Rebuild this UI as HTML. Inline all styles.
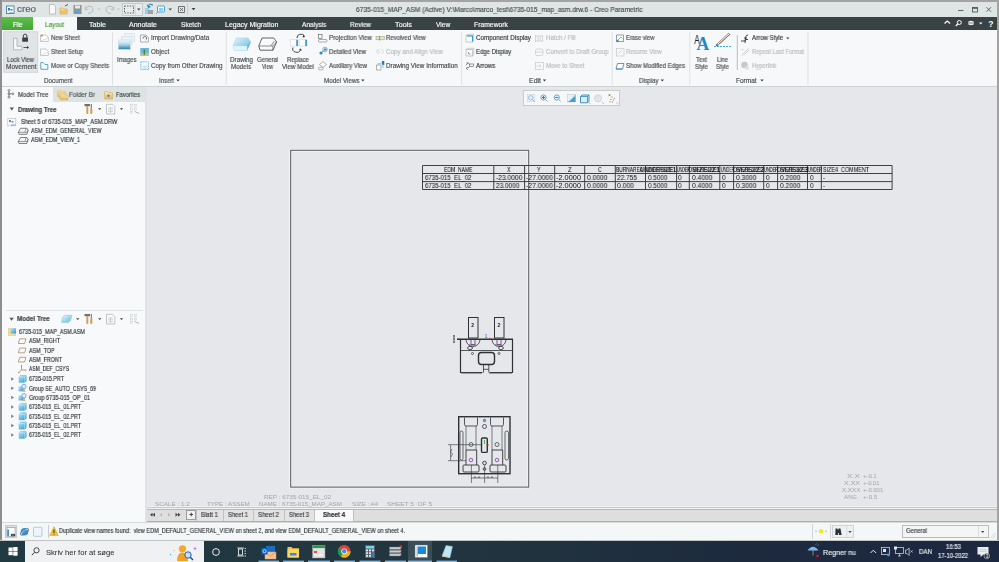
<!DOCTYPE html>
<html><head><meta charset="utf-8"><style>
html,body{margin:0;padding:0;width:999px;height:562px;overflow:hidden;background:#e6e7eb}
body>div{position:absolute}
.t{position:absolute;white-space:pre;line-height:1;-webkit-text-stroke:0.17px currentColor;will-change:transform;font-family:"Liberation Sans",sans-serif;transform-origin:0 50%}
svg{position:absolute;left:0;top:0}
</style></head><body>
<div style="left:0px;top:0px;width:999px;height:562px;background:#e6e7eb"></div>
<div style="left:0px;top:0px;width:999px;height:2px;background:#a3a3a3"></div>
<div style="left:0px;top:0px;width:2px;height:541px;background:#8e8e8e"></div>
<div style="left:997px;top:0px;width:2px;height:541px;background:#a2a2a2"></div>
<div style="left:2px;top:2px;width:995px;height:15px;background:#dfe4e4"></div>
<div style="left:2px;top:17px;width:995px;height:13px;background:#3a4344"></div>
<div style="left:2px;top:17px;width:31px;height:13px;background:linear-gradient(#5cc049,#43a535)"></div>
<div style="left:33px;top:17px;width:44px;height:14px;background:#f6f8f9"></div>
<div style="left:2px;top:30px;width:995px;height:56px;background:#f6f8f9"></div>
<div style="left:77px;top:30px;width:920px;height:1px;background:#f6f8f9"></div>
<div style="left:2px;top:86px;width:995px;height:1px;background:#cdd2d3"></div>
<div style="left:2px;top:87px;width:144px;height:15px;background:#dde3e3"></div>
<div style="left:2px;top:87px;width:51px;height:15px;background:#f7f9fa"></div>
<div style="left:2px;top:102px;width:143px;height:420px;background:#f7f9fa"></div>
<div style="left:145px;top:87px;width:2px;height:435px;background:#dfe3e4"></div>
<div style="left:6px;top:310px;width:137px;height:1px;background:#dfe4e5"></div>
<div style="left:147px;top:87px;width:850px;height:421px;background:#e6e7eb"></div>
<div style="left:523px;top:90px;width:97px;height:16px;background:#f6f7f8;border:1px solid #c9cbcd;box-sizing:border-box"></div>
<div style="left:147px;top:506px;width:850px;height:1px;background:#eef0f2"></div>
<div style="left:147px;top:507px;width:850px;height:1px;background:#c6c8cb"></div>
<div style="left:147px;top:508px;width:850px;height:1px;background:#f1f2f3"></div>
<div style="left:147px;top:509px;width:850px;height:1px;background:#b4b7b9"></div>
<div style="left:147px;top:510px;width:850px;height:12px;background:#dedede"></div>
<div style="left:147px;top:521px;width:850px;height:1.5px;background:#aab0b2"></div>
<div style="left:186px;top:510px;width:10px;height:10px;background:#f0f0f0;border:1px solid #9c9c9c;box-sizing:border-box"></div>
<div style="left:196px;top:510px;width:118px;height:11px;background:#e3e3e3"></div>
<div style="left:196px;top:510px;width:1px;height:11px;background:#c2c2c2"></div>
<div style="left:223px;top:510px;width:1px;height:11px;background:#c2c2c2"></div>
<div style="left:253px;top:510px;width:1px;height:11px;background:#c2c2c2"></div>
<div style="left:284px;top:510px;width:1px;height:11px;background:#c2c2c2"></div>
<div style="left:314px;top:509.5px;width:40px;height:12px;background:#f9f9f9;border:1px solid #c0c0c0;border-top:none;box-sizing:border-box"></div>
<div style="left:2px;top:522px;width:995px;height:18px;background:#f3f7f8"></div>
<div style="left:2px;top:522px;width:995px;height:1px;background:#d4d8d9"></div>
<div style="left:0px;top:540px;width:999px;height:1px;background:#c2c4c5"></div>
<div style="left:5px;top:525px;width:12px;height:13px;background:#dde1e3;border:1px solid #c5c9cb;box-sizing:border-box"></div>
<div style="left:48px;top:525px;width:1px;height:13px;background:#c9cdcf"></div>
<div style="left:812px;top:524px;width:1px;height:15px;background:#d0d4d6"></div>
<div style="left:830px;top:524px;width:1px;height:15px;background:#d0d4d6"></div>
<div style="left:832px;top:525px;width:22px;height:13px;background:#eef1f2;border:1px solid #cfd3d5;box-sizing:border-box"></div>
<div style="left:902px;top:525px;width:87px;height:13px;background:#f4f6f6;border:1px solid #b9bdbf;box-sizing:border-box"></div>
<div style="left:0px;top:541px;width:999px;height:21px;background:linear-gradient(90deg,#213a41 0%,#22353f 45%,#1d2a3e 75%,#1c2840 100%)"></div>
<div style="left:25px;top:541px;width:179px;height:21px;background:#eff1f2"></div>
<div style="left:408px;top:541px;width:24px;height:21px;background:#3b4d57"></div>
<svg width="999" height="562" viewBox="0 0 999 562"><rect x="290.7" y="150.3" width="238" height="336.8" fill="none" stroke="#f7f8fa" stroke-width="2.6"/>
<rect x="290.7" y="150.3" width="238" height="336.8" fill="none" stroke="#5d6063" stroke-width="1.1"/>
<rect x="616" y="166.2" width="205" height="6.6" fill="#dcdde0"/>
<g stroke="#3d4144" stroke-width="1" fill="none">
<line x1="422.5" y1="165.5" x2="422.5" y2="189.5"/>
<line x1="493.8" y1="165.5" x2="493.8" y2="189.5"/>
<line x1="524.6" y1="165.5" x2="524.6" y2="189.5"/>
<line x1="554.7" y1="165.5" x2="554.7" y2="189.5"/>
<line x1="584.7" y1="165.5" x2="584.7" y2="189.5"/>
<line x1="615.3" y1="165.5" x2="615.3" y2="189.5"/>
<line x1="645.5" y1="165.5" x2="645.5" y2="189.5"/>
<line x1="676.6" y1="165.5" x2="676.6" y2="189.5"/>
<line x1="689.3" y1="165.5" x2="689.3" y2="189.5"/>
<line x1="719.8" y1="165.5" x2="719.8" y2="189.5"/>
<line x1="733.6" y1="165.5" x2="733.6" y2="189.5"/>
<line x1="763.7" y1="165.5" x2="763.7" y2="189.5"/>
<line x1="777.6" y1="165.5" x2="777.6" y2="189.5"/>
<line x1="807.5" y1="165.5" x2="807.5" y2="189.5"/>
<line x1="821.3" y1="165.5" x2="821.3" y2="189.5"/>
<line x1="892.1" y1="165.5" x2="892.1" y2="189.5"/>
<line x1="422.5" y1="165.5" x2="892.1" y2="165.5"/>
<line x1="422.5" y1="173.5" x2="892.1" y2="173.5"/>
<line x1="422.5" y1="181.6" x2="892.1" y2="181.6"/>
<line x1="422.5" y1="189.5" x2="892.1" y2="189.5"/>
</g>
<g fill="none" stroke="#2e3236" stroke-width="1">
<rect x="468.5" y="317.5" width="9.5" height="20.5"/>
<rect x="494.5" y="317.5" width="9.5" height="20.5"/>
<path d="M482.5 372.5 H460.5 V339.5 H512.5 V372.5 H489.5" stroke-width="1.2"/>
<path d="M483.5 364.8 V372.5 M488.8 364.8 V372.5 M483.5 369.3 H488.8" stroke-width="0.8"/>
<line x1="457" y1="339.3" x2="513" y2="339.3" stroke-width="1.5"/>
<line x1="461" y1="350.5" x2="512" y2="350.5" stroke-width="0.8"/>
<rect x="478.5" y="352.5" width="16" height="12" rx="3" stroke-width="1.4"/>
<path d="M466 339.5 A7 7 0 0 0 480 339.5" stroke-width="0.8"/>
<path d="M492 339.5 A7 7 0 0 0 506 339.5" stroke-width="0.8"/>
<rect x="471" y="339.5" width="4" height="5" stroke-width="0.7"/>
<rect x="497" y="339.5" width="4" height="5" stroke-width="0.7"/>
<ellipse cx="470" cy="348" rx="2.5" ry="1.6" stroke-width="0.8"/>
<ellipse cx="501" cy="348" rx="2.5" ry="1.6" stroke-width="0.8"/>
<circle cx="472.5" cy="353.5" r="1" stroke-width="0.7"/>
<circle cx="499" cy="353.5" r="1" stroke-width="0.7"/>
<line x1="461" y1="373.3" x2="482" y2="373.3" stroke="#777" stroke-width="0.8"/>
<line x1="489" y1="373.3" x2="512" y2="373.3" stroke="#777" stroke-width="0.8"/>
</g>
<text x="471.3" y="326.5" font-family="Liberation Sans" font-weight="700" font-size="4.8" fill="#111">2</text>
<text x="497.6" y="326.5" font-family="Liberation Sans" font-weight="700" font-size="4.8" fill="#111">2</text>
<text x="484.8" y="338" font-family="Liberation Sans" font-size="4.5" fill="#2a3cd0">1</text>
<circle cx="490" cy="338.5" r="0.8" fill="#d03030"/>
<line x1="469" y1="345" x2="476" y2="345" stroke="#8a2aa0" stroke-width="0.8"/>
<line x1="495" y1="345" x2="502" y2="345" stroke="#8a2aa0" stroke-width="0.8"/>
<path d="M454 335 V343 M453 336 h2 M453 339 h2 M453 342 h2" stroke="#2e3236" stroke-width="0.7"/>
<line x1="457" y1="339.3" x2="461" y2="339.3" stroke="#2e3236" stroke-width="0.8"/>
<g fill="none" stroke="#2e3236" stroke-width="1">
<rect x="458.7" y="416.7" width="51.3" height="57" stroke-width="1.4"/>
<path d="M464.5 417.5 V424.5 Q464.5 426 466 426 H476 Q477.5 426 477.5 424.5 V417.5" stroke-width="0.8"/>
<path d="M490.5 417.5 V424.5 Q490.5 426 492 426 H502 Q503.5 426 503.5 424.5 V417.5" stroke-width="0.8"/>
<line x1="466" y1="426" x2="466" y2="450" stroke-width="0.6"/>
<line x1="476" y1="426" x2="476" y2="450" stroke-width="0.6"/>
<line x1="492" y1="426" x2="492" y2="450" stroke-width="0.6"/>
<line x1="502" y1="426" x2="502" y2="450" stroke-width="0.6"/>
<rect x="460" y="431" width="3" height="29" rx="1.5" stroke-width="0.7"/>
<rect x="505" y="431" width="3.5" height="29" rx="1.7" stroke-width="0.7"/>
<rect x="481.5" y="438" width="5.8" height="14.4" rx="1.2" stroke-width="1.4"/>
<circle cx="484.5" cy="420.5" r="1.2" stroke-width="0.7"/>
<circle cx="484.5" cy="426.5" r="2" stroke-width="0.8"/>
<circle cx="471" cy="444.5" r="2" stroke-width="0.7"/>
<circle cx="497" cy="444.5" r="2" stroke-width="0.7"/>
<circle cx="484.5" cy="463" r="1.8" stroke-width="0.9"/>
<circle cx="484.5" cy="469" r="1.4" stroke-width="0.8"/>
<path d="M466 465 V450 H476.7 V465" stroke-width="0.9"/>
<path d="M492 465 V450 H502.7 V465" stroke-width="0.9"/>
<rect x="463" y="465" width="16" height="7" rx="1" stroke-width="0.9"/>
<rect x="490" y="465" width="16" height="7" rx="1" stroke-width="0.9"/>
<path d="M448 444.7 H481 M448 460.7 H466 M450.6 445 V460.5" stroke-width="0.6"/>
<path d="M471.4 465 V483 M484.6 465 V483 M497.8 465 V483 M471 478 H498" stroke-width="0.6"/>
</g>
<circle cx="471" cy="460" r="1.8" fill="none" stroke="#7a3ad0" stroke-width="0.8"/>
<circle cx="497" cy="460" r="1.8" fill="none" stroke="#7a3ad0" stroke-width="0.8"/>
<circle cx="472" cy="459" r="0.8" fill="#e0a020"/>
<circle cx="498" cy="459" r="0.8" fill="#e0a020"/>
<line x1="484.5" y1="440" x2="484.5" y2="444" stroke="#30b040" stroke-width="0.9"/>
<line x1="486" y1="445" x2="489" y2="445" stroke="#d03030" stroke-width="0.8"/>
<circle cx="484.5" cy="420.5" r="0.5" fill="#1a88c0"/>
<path d="M452 449 l-1.5 3 l2 2 l-1.5 3" fill="none" stroke="#2e3236" stroke-width="0.6"/>
<path d="M474 478 l1 -1.5 l1 1.5 M478 478 l1 -1.5 l1 1.5 M487 478 l1 -1.5 l1 1.5 M491 478 l1 -1.5 l1 1.5" fill="none" stroke="#2e3236" stroke-width="0.6"/>
<g fill="none" stroke="#6a6e71" stroke-width="0.8"><circle cx="9" cy="90.5" r="1"/><circle cx="9" cy="93.8" r="1"/><circle cx="9" cy="97.2" r="1"/><circle cx="12.8" cy="93.8" r="1"/><path d="M9 91.5 V96.2 M10 93.8 H11.8"/></g>
<path d="M57.5 90.5 h3 l1 1 h3.5 v5 h-7.5z" fill="url(#gfold)" stroke="#d9b56a" stroke-width="0.5"/>
<path d="M59.0 92.3 h3 l1 1 h3.5 v5 h-7.5z" fill="url(#gfold)" stroke="#d9b56a" stroke-width="0.5"/>
<path d="M60.5 94.1 h3 l1 1 h3.5 v5 h-7.5z" fill="url(#gfold)" stroke="#d9b56a" stroke-width="0.5"/>
<path d="M104.5 91.5 h3 l1 1 h4 v6.5 h-8z" fill="url(#gfold)" stroke="#d1a85a" stroke-width="0.5"/><circle cx="108.5" cy="95.8" r="1.1" fill="#1e78c0"/>
<rect x="84.5" y="104" width="5.5" height="2.2" fill="#6f6f6f"/><rect x="86.3" y="106" width="2" height="8" rx="0.8" fill="#cfa35e"/><rect x="90.8" y="104" width="0.9" height="4" fill="#555"/><rect x="90.2" y="108" width="2.2" height="6" rx="1" fill="#cfa35e"/>
<path d="M98 108.2 h3.4 l-1.7 1.9z" fill="#45494c"/>
<path d="M106.5 104.3 h6 l2.3 2.3 v7.4 h-8.3z" fill="#fafafa" stroke="#9da1a4" stroke-width="0.6"/><path d="M108 108 h5 M108 109.8 h5 M108 111.6 h5 M110.5 107 v6" stroke="#a9b9c4" stroke-width="0.5"/>
<path d="M119.8 108.2 h3.4 l-1.7 1.9z" fill="#45494c"/>
<g fill="none" stroke="#c4c8cb" stroke-width="0.5"><rect x="130.5" y="104.5" width="2" height="2"/><rect x="130.5" y="108" width="2" height="2"/><rect x="130.5" y="111.5" width="2" height="2"/><rect x="134.5" y="104.5" width="2" height="2"/><rect x="134.5" y="108" width="2" height="2"/></g><path d="M135 111 l1.5 2 l1 -1 l1.5 2" stroke="#8a8e91" stroke-width="0.6" fill="none"/>
<rect x="84.5" y="314" width="5.5" height="2.2" fill="#6f6f6f"/><rect x="86.3" y="316" width="2" height="8" rx="0.8" fill="#cfa35e"/><rect x="90.8" y="314" width="0.9" height="4" fill="#555"/><rect x="90.2" y="318" width="2.2" height="6" rx="1" fill="#cfa35e"/>
<path d="M98 318.2 h3.4 l-1.7 1.9z" fill="#45494c"/>
<path d="M106.5 314.3 h6 l2.3 2.3 v7.4 h-8.3z" fill="#fafafa" stroke="#9da1a4" stroke-width="0.6"/><path d="M108 318 h5 M108 319.8 h5 M108 321.6 h5 M110.5 317 v6" stroke="#a9b9c4" stroke-width="0.5"/>
<path d="M119.8 318.2 h3.4 l-1.7 1.9z" fill="#45494c"/>
<g fill="none" stroke="#c4c8cb" stroke-width="0.5"><rect x="130.5" y="314.5" width="2" height="2"/><rect x="130.5" y="318" width="2" height="2"/><rect x="130.5" y="321.5" width="2" height="2"/><rect x="134.5" y="314.5" width="2" height="2"/><rect x="134.5" y="318" width="2" height="2"/></g><path d="M135 321 l1.5 2 l1 -1 l1.5 2" stroke="#8a8e91" stroke-width="0.6" fill="none"/>
<path d="M9.6 107.6 h4.4 l-2.2 3z" fill="#505457"/>
<path d="M9.4 317.7 h4.4 l-2.2 3z" fill="#505457"/>
<path d="M62.5 317 L65 315.3 H72 L70.5 320.5 L68 322.5 H61.5 Z" fill="url(#gblue)" stroke="#7cc3e3" stroke-width="0.5"/><path d="M76 318.2 h3.4 l-1.7 1.9z" fill="#45494c"/>
<rect x="7.8" y="118.3" width="8" height="7.5" fill="#fafafa" stroke="#b4b8bb" stroke-width="0.6"/><rect x="9" y="120" width="2" height="2" fill="#7a8a99"/><rect x="11.5" y="121" width="2" height="1.5" fill="#7a8a99"/><line x1="11" y1="125" x2="15.5" y2="125" stroke="#3a9ad0" stroke-width="0.8"/>
<path d="M20.5 128.3 H27 L28.2 130.3 L26.8 134.3 H19 L18.3 132.3 Z" fill="#f4f4f4" stroke="#55595c" stroke-width="0.75"/><path d="M18.3 132.3 H26.8 L28.2 130.3 M26 128.8 L25 131.8" fill="none" stroke="#55595c" stroke-width="0.6"/>
<path d="M20.5 137.5 H27 L28.2 139.5 L26.8 143.5 H19 L18.3 141.5 Z" fill="#f4f4f4" stroke="#55595c" stroke-width="0.75"/><path d="M18.3 141.5 H26.8 L28.2 139.5 M26 138.0 L25 141.0" fill="none" stroke="#55595c" stroke-width="0.6"/>
<rect x="8.3" y="328.5" width="7.5" height="7" fill="#f7dca0" stroke="#e5c070" stroke-width="0.5"/><rect x="10.5" y="328.3" width="5.5" height="5.2" fill="url(#gcube)"/>
<path d="M19.8 338.8 H26 L24.6 343.5 H18.3 Z" fill="none" stroke="#a58a5e" stroke-width="0.75"/>
<path d="M19.8 348.1 H26 L24.6 352.8 H18.3 Z" fill="none" stroke="#a58a5e" stroke-width="0.75"/>
<path d="M19.8 357.3 H26 L24.6 362.0 H18.3 Z" fill="none" stroke="#a58a5e" stroke-width="0.75"/>
<path d="M21.5 365.5 V370 L18.8 372.5 M21.5 370 H26" fill="none" stroke="#a58a5e" stroke-width="0.8"/><circle cx="26" cy="370" r="0.6" fill="#a58a5e"/><circle cx="18.8" cy="372.5" r="0.7" fill="#a58a5e"/><circle cx="21.5" cy="365.5" r="0.6" fill="#a58a5e"/>
<path d="M11.2 377.2 L14 379 L11.2 380.8 Z" fill="#7b7f82"/>
<path d="M11.2 386.5 L14 388.3 L11.2 390.1 Z" fill="#7b7f82"/>
<path d="M11.2 395.7 L14 397.5 L11.2 399.3 Z" fill="#7b7f82"/>
<path d="M11.2 405.2 L14 407 L11.2 408.8 Z" fill="#7b7f82"/>
<path d="M11.2 414.5 L14 416.3 L11.2 418.1 Z" fill="#7b7f82"/>
<path d="M11.2 423.8 L14 425.6 L11.2 427.40000000000003 Z" fill="#7b7f82"/>
<path d="M11.2 433.2 L14 435 L11.2 436.8 Z" fill="#7b7f82"/>
<path d="M19 377 L20.5 375.4 H26.3 V381 L24.8 382.6 H19 Z" fill="url(#gcube)" stroke="#48a8d8" stroke-width="0.4"/><path d="M19 377 H24.8 V382.6 M24.8 377 L26.3 375.4" fill="none" stroke="#e8f6fc" stroke-width="0.5"/>
<path d="M19 405 L20.5 403.4 H26.3 V409 L24.8 410.6 H19 Z" fill="url(#gcube)" stroke="#48a8d8" stroke-width="0.4"/><path d="M19 405 H24.8 V410.6 M24.8 405 L26.3 403.4" fill="none" stroke="#e8f6fc" stroke-width="0.5"/>
<path d="M19 414.3 L20.5 412.7 H26.3 V418.3 L24.8 419.90000000000003 H19 Z" fill="url(#gcube)" stroke="#48a8d8" stroke-width="0.4"/><path d="M19 414.3 H24.8 V419.90000000000003 M24.8 414.3 L26.3 412.7" fill="none" stroke="#e8f6fc" stroke-width="0.5"/>
<path d="M19 423.6 L20.5 422.0 H26.3 V427.6 L24.8 429.20000000000005 H19 Z" fill="url(#gcube)" stroke="#48a8d8" stroke-width="0.4"/><path d="M19 423.6 H24.8 V429.20000000000005 M24.8 423.6 L26.3 422.0" fill="none" stroke="#e8f6fc" stroke-width="0.5"/>
<path d="M19 433 L20.5 431.4 H26.3 V437 L24.8 438.6 H19 Z" fill="url(#gcube)" stroke="#48a8d8" stroke-width="0.4"/><path d="M19 433 H24.8 V438.6 M24.8 433 L26.3 431.4" fill="none" stroke="#e8f6fc" stroke-width="0.5"/>
<rect x="18.5" y="386.3" width="6" height="5" fill="url(#gcube)"/><circle cx="24" cy="386.5" r="2.2" fill="#e0ecf7" stroke="#4b7fd0" stroke-width="0.6"/><path d="M22.5 392.1 L24 387.8 L25.6 392.1 Z" fill="#e0b86a"/>
<rect x="18.5" y="395.5" width="6" height="5" fill="url(#gcube)"/><circle cx="24" cy="395.7" r="2.2" fill="#e0ecf7" stroke="#4b7fd0" stroke-width="0.6"/><path d="M22.5 401.3 L24 397.0 L25.6 401.3 Z" fill="#e0b86a"/>
<rect x="527.3" y="94.3" width="7.5" height="7.5" fill="#f2f4f5" stroke="#c9cdd0" stroke-width="0.5"/><circle cx="530.8" cy="97.8" r="2.3" fill="#dff0f8" stroke="#7fb6d8" stroke-width="0.8"/><line x1="532.5" y1="99.5" x2="534.5" y2="101.5" stroke="#999" stroke-width="0.9"/>
<circle cx="543.5" cy="97.5" r="2.6" fill="#e6f3fa" stroke="#4a90c0" stroke-width="0.8"/><path d="M542 97.5 h3 M543.5 96 v3" stroke="#1f6fa8" stroke-width="0.9"/><line x1="545.5" y1="99.5" x2="547.5" y2="101.5" stroke="#999" stroke-width="0.9"/>
<circle cx="556.8" cy="97.5" r="2.6" fill="#e6f3fa" stroke="#4a90c0" stroke-width="0.8"/><path d="M555.3 97.5 h3" stroke="#1f6fa8" stroke-width="0.9"/><line x1="558.8" y1="99.5" x2="560.8" y2="101.5" stroke="#999" stroke-width="0.9"/>
<rect x="567.5" y="94.5" width="8" height="7.5" fill="#e8f1f5" stroke="#b9c3c8" stroke-width="0.5"/><path d="M567.5 102 L575.5 94.5 V102 Z" fill="#4a9ec8"/><path d="M568.5 101.5 L575 95.5" stroke="#fff" stroke-width="0.8"/>
<path d="M580.5 96.5 L582 95 H589 V101.3 L587.5 102.8 H580.5 Z" fill="#d9eef8" stroke="#2f86ba" stroke-width="0.9"/><path d="M580.5 96.5 H587.5 V102.8 M587.5 96.5 L589 95" fill="none" stroke="#2f86ba" stroke-width="0.8"/><path d="M589 102.5 l1 1" stroke="#555" stroke-width="0.7"/>
<circle cx="598" cy="98.3" r="3.6" fill="#e4e6e8" stroke="#c4c8cb" stroke-width="0.6"/><path d="M596 96 l3 3" stroke="#cfd3d6" stroke-width="0.6"/><path d="M602.5 102.5 l1 1" stroke="#555" stroke-width="0.7"/>
<g fill="#8a6a3a"><circle cx="609.5" cy="95.2" r="0.7"/><circle cx="612" cy="97" r="0.6"/><circle cx="611" cy="99.5" r="0.6"/><circle cx="613.5" cy="100" r="0.6"/><circle cx="610" cy="101.8" r="0.6"/><circle cx="612.5" cy="102" r="0.6"/><circle cx="614.5" cy="98.3" r="0.5"/></g><path d="M608.5 94.3 l2 2 M610.5 94.3 l-2 2" stroke="#8a6a3a" stroke-width="0.5"/><path d="M616.8 102.5 l1 1" stroke="#555" stroke-width="0.7"/>
<path d="M150 514.8 l2.5 -2 v4z M152.5 514.8 l2.5 -2 v4z" fill="#45494c"/>
<path d="M159.5 514.8 l2.5 -2 v4z" fill="#b9bdc0"/><path d="M170.5 514.8 l-2.5 -2 v4z" fill="#b9bdc0"/>
<path d="M178 514.8 l-2.5 -2 v4z M180.5 514.8 l-2.5 -2 v4z" fill="#45494c"/>
<path d="M189.5 514.5 h3.5 M191.25 512.75 v3.5" stroke="#333" stroke-width="0.9"/>
<rect x="7" y="527.5" width="8" height="9" fill="#fff" stroke="#8b9094" stroke-width="0.6"/><rect x="7.3" y="529.5" width="1.6" height="6.5" fill="#2a8ad0"/><ellipse cx="13" cy="535" rx="2.3" ry="1.3" fill="#333"/><circle cx="13" cy="535" r="0.6" fill="#fff"/>
<circle cx="24.5" cy="531.8" r="3.8" fill="#3a9ce0"/><path d="M21 534 Q24.5 528 28.5 529.5" fill="none" stroke="#e6f0fa" stroke-width="0.7"/><ellipse cx="24.5" cy="531.8" rx="5" ry="2" fill="none" stroke="#555" stroke-width="0.6" transform="rotate(-35 24.5 531.8)"/>
<rect x="33.5" y="527.3" width="8.5" height="9" rx="1" fill="#eef4f8" stroke="#9fb7c8" stroke-width="0.7"/>
<path d="M54 526.5 L58.3 535.5 H49.7 Z" fill="#f2c12e" stroke="#d9a315" stroke-width="0.5"/><path d="M54 529.5 V533" stroke="#333" stroke-width="1"/><circle cx="54" cy="534.3" r="0.5" fill="#333"/>
<circle cx="816" cy="531.3" r="1" fill="#c9cdd0"/><circle cx="821" cy="531.3" r="2.3" fill="#f5ea12"/><circle cx="826" cy="531.3" r="1" fill="#c9cdd0"/>
<path d="M835.5 528.5 h2 v1 h1 v-1 h2 l1.2 6.5 h-2.8 v-2 h-0.8 v2 h-2.8z" fill="#2d3134"/><line x1="846.8" y1="526" x2="846.8" y2="537" stroke="#d4d8da" stroke-width="0.8"/><path d="M848.3 531 h3.4 l-1.7 1.9z" fill="#45494c"/>
<line x1="978.5" y1="526" x2="978.5" y2="537" stroke="#d4d8da" stroke-width="0.8"/><path d="M981 531 h3.4 l-1.7 1.9z" fill="#45494c"/>
<path d="M990 538.5 L995.5 533 M992.5 538.5 L995.5 535.5 M995 538.5 l0.5 -0.5" stroke="#b9bdc0" stroke-width="0.6"/>
<g fill="#fff"><rect x="8.5" y="547.5" width="4.2" height="3.6"/><rect x="13.2" y="547" width="4.4" height="4.1"/><rect x="8.5" y="551.6" width="4.2" height="3.6"/><rect x="13.2" y="551.6" width="4.4" height="4.1"/></g>
<circle cx="36.5" cy="550.3" r="2.6" fill="none" stroke="#333" stroke-width="0.9"/><line x1="34.6" y1="552.3" x2="31.8" y2="555.2" stroke="#333" stroke-width="1"/>
<path d="M177 561 Q177 553 182 552.5 Q188 553 188 561 Z" fill="#f5a020"/><circle cx="182.5" cy="548.8" r="3.6" fill="#f7a828"/><circle cx="188" cy="555" r="3.2" fill="#bfe3f5" stroke="#2a5fb0" stroke-width="1"/><line x1="190.3" y1="557.3" x2="193" y2="560" stroke="#2a3a90" stroke-width="1.3"/>
<path d="M195 546.5 l0.6 1.4 l1.4 0.6 l-1.4 0.6 l-0.6 1.4 l-0.6 -1.4 l-1.4 -0.6 l1.4 -0.6z" fill="#c070e8"/><circle cx="170.5" cy="554.5" r="0.7" fill="#40c0f0"/><circle cx="174" cy="550.5" r="0.6" fill="#f5a020"/>
<circle cx="216" cy="552" r="3.4" fill="none" stroke="#fff" stroke-width="0.9"/>
<g fill="none" stroke="#fff" stroke-width="0.8"><rect x="238.5" y="549" width="4" height="6"/><path d="M237.3 548 h6.5 M237.3 556 h6.5 M244.5 548.5 h1.5 M244.5 551 h1.5 M244.5 553.5 h1.5 M244.5 556 h1.5"/></g>
<rect x="266" y="546" width="9" height="8" fill="#1a6dc0"/><rect x="265" y="552" width="11" height="7" fill="#f5c49a" stroke="#e8a060" stroke-width="0.5"/><path d="M265 552 L270.5 556 L276 552" fill="none" stroke="#d08040" stroke-width="0.6"/><rect x="261.5" y="548" width="6" height="6.5" fill="#0a64c0"/><circle cx="264.5" cy="551.2" r="1.6" fill="none" stroke="#fff" stroke-width="0.7"/>
<path d="M287.5 547 h4 l1.2 1.2 h6.3 v9.3 h-11.5z" fill="#f6c342"/><rect x="287.5" y="549.5" width="11.5" height="8" fill="#fcd664"/><rect x="290" y="553" width="6.5" height="2.5" fill="#2c8fd8"/>
<rect x="312.5" y="545.5" width="12.5" height="12.5" fill="#d6d6d6" stroke="#aaa" stroke-width="0.4"/><rect x="312.5" y="545.5" width="12.5" height="2.5" fill="#2e9a3e"/><rect x="314" y="549.5" width="9.5" height="7" fill="#f0f0f0"/><path d="M314 551 h9 M314 553 h9 M317 549.5 v7" stroke="#b0b0b0" stroke-width="0.4"/><rect x="314" y="551" width="3" height="2" fill="#e05050"/>
<circle cx="344.2" cy="551.3" r="6.3" fill="#db4437"/><path d="M344.2 551.3 L338.7 548.1 A6.3 6.3 0 0 0 341 556.8 Z" fill="#0f9d58"/><path d="M344.2 551.3 L341 556.8 A6.3 6.3 0 0 0 350.5 551.3 Z" fill="#0f9d58"/><path d="M344.2 551.3 L350.5 551.3 A6.3 6.3 0 0 1 341 556.8 Z" fill="#f4b400"/><circle cx="344.2" cy="551.3" r="2.9" fill="#fff"/><circle cx="344.2" cy="551.3" r="2.2" fill="#4285f4"/>
<rect x="365" y="545" width="10" height="13" fill="#5a6068"/><rect x="366" y="546" width="8" height="2.5" fill="#7ad0f0"/><g fill="#e8eaec"><rect x="366" y="549.5" width="2" height="1.8"/><rect x="369" y="549.5" width="2" height="1.8"/><rect x="372" y="549.5" width="2" height="1.8"/><rect x="366" y="552.3" width="2" height="1.8"/><rect x="369" y="552.3" width="2" height="1.8"/><rect x="366" y="555" width="2" height="1.8"/><rect x="369" y="555" width="2" height="1.8"/></g><rect x="372" y="552.3" width="2" height="4.5" fill="#2a80d0"/>
<g fill="#c8ccd0" stroke="#6a6e72" stroke-width="0.4"><path d="M389.5 547 h12 l-1 2.5 h-11z"/><path d="M389.5 550.3 h12 l-1 2.5 h-11z"/><path d="M389.5 553.6 h12 l-1 2.5 h-11z"/></g><rect x="399.5" y="545.5" width="2.5" height="1.8" fill="#e03030"/>
<rect x="415" y="545" width="12.5" height="12.5" fill="#fdfdfd" stroke="#6a7a88" stroke-width="0.5"/><rect x="417.5" y="546.5" width="8.5" height="7.5" fill="#1a8ad8"/><rect x="416.5" y="546.5" width="1.5" height="10" fill="#b0b8c0"/>
<path d="M442 556 L446 545.5 L452.5 546.5 L450 557.5 Z" fill="#bfe6f5" stroke="#8ab8d0" stroke-width="0.5"/><path d="M442 556 L450 557.5" stroke="#e0d0a0" stroke-width="1"/>
<rect x="258.5" y="560.6" width="20.5" height="1.4" fill="#7fb7e0"/>
<rect x="283" y="560.6" width="21" height="1.4" fill="#7fb7e0"/>
<rect x="308" y="560.6" width="22" height="1.4" fill="#7fb7e0"/>
<rect x="334" y="560.6" width="21" height="1.4" fill="#7fb7e0"/>
<rect x="359.5" y="560.6" width="21.0" height="1.4" fill="#7fb7e0"/>
<rect x="385" y="560.6" width="21" height="1.4" fill="#7fb7e0"/>
<rect x="408" y="560.6" width="24" height="1.4" fill="#7fb7e0"/>
<rect x="436.5" y="560.6" width="20.5" height="1.4" fill="#7fb7e0"/>
<path d="M807.5 550.5 Q813 543 818.5 550.5 Z" fill="#7ab8e8"/><line x1="813" y1="550" x2="813" y2="555.5" stroke="#ccc" stroke-width="0.6"/><circle cx="817.5" cy="556" r="1.3" fill="#e81123"/><path d="M815.5 545 l1 -1.5 M817.5 546 l1 -1.5" stroke="#7ab8e8" stroke-width="0.5"/>
<path d="M870.5 553 L873.3 550.2 L876.1 553" fill="none" stroke="#fff" stroke-width="0.9"/>
<rect x="881.5" y="547.5" width="8" height="7" fill="none" stroke="#dfe6ea" stroke-width="0.7"/><rect x="883" y="549" width="3" height="3" fill="#dfe6ea"/><circle cx="888.5" cy="555" r="1.4" fill="#3a9ee8"/>
<rect x="895.5" y="547.5" width="8" height="6" fill="none" stroke="#dfe6ea" stroke-width="0.7"/><path d="M898 556 h3 M899.5 553.5 v2.5" stroke="#dfe6ea" stroke-width="0.7"/><rect x="894" y="546.5" width="3" height="3" fill="#dfe6ea"/>
<path d="M905.5 550 h1.6 l2 -2 v7.5 l-2 -2 h-1.6z" fill="none" stroke="#dfe6ea" stroke-width="0.7"/><path d="M910.5 550.3 l2.2 2.2 M912.7 550.3 l-2.2 2.2" stroke="#dfe6ea" stroke-width="0.6"/>
<path d="M977.5 547 h11 v7.5 h-5 l-3 2.5 v-2.5 h-3z" fill="#eaeef0"/><path d="M979.5 549.3 h7 M979.5 551.3 h7" stroke="#9aa" stroke-width="0.5"/><circle cx="986.8" cy="556" r="2.8" fill="#2b2f36" stroke="#dfe6ea" stroke-width="0.5"/><text x="985.7" y="557.8" font-family="Liberation Sans" font-size="4.5" fill="#fff">3</text>
<defs><linearGradient id="gblue" x1="0" y1="0" x2="1" y2="1"><stop offset="0" stop-color="#e6f6fc"/><stop offset="1" stop-color="#5fb8e0"/></linearGradient><linearGradient id="gphoto" x1="0" y1="0" x2="0" y2="1"><stop offset="0" stop-color="#f4fafd"/><stop offset="0.5" stop-color="#a8d4ea"/><stop offset="1" stop-color="#2a7fa8"/></linearGradient><linearGradient id="gfold" x1="0" y1="0" x2="0" y2="1"><stop offset="0" stop-color="#fbe7b5"/><stop offset="1" stop-color="#e5b45a"/></linearGradient><linearGradient id="gcube" x1="0" y1="0" x2="1" y2="1"><stop offset="0" stop-color="#b9e6f8"/><stop offset="1" stop-color="#2d9ad0"/></linearGradient></defs>
<rect x="6.5" y="6" width="7.5" height="7.5" fill="#fff" stroke="#4f8db5" stroke-width="1"/>
<rect x="8" y="8" width="2" height="2.5" fill="#3a7aa5"/><rect x="10.5" y="9" width="2" height="1.5" fill="#3a7aa5"/><line x1="9" y1="12.5" x2="13" y2="12.5" stroke="#6aa0c5" stroke-width="0.6"/>
<path d="M49.5 4.5 H53.5 L55.5 6.5 V14 H49.5 Z" fill="#fbfbfb" stroke="#a6aaad" stroke-width="0.7"/>
<path d="M60 8 H63 L64 9 H67 V14 H60 Z" fill="url(#gfold)" stroke="#c09040" stroke-width="0.5"/><path d="M61 10.5 H68.5 L67 14 H60 Z" fill="#f0c060"/><path d="M65 6 L68 4.5" stroke="#333" stroke-width="0.8"/>
<rect x="73.5" y="5" width="8" height="9" fill="#8e9296" rx="0.5"/><rect x="75" y="5.5" width="5" height="3" fill="#e8eaeb"/><rect x="75" y="10.5" width="5" height="3" fill="#5aa6d0"/>
<path d="M86 8.5 A3.5 3.5 0 1 1 88 13" fill="none" stroke="#b4b8bb" stroke-width="1"/><path d="M85 6.5 L85.5 10 L88.5 9" fill="none" stroke="#b4b8bb" stroke-width="0.9"/>
<path d="M97.5 8.5 h3 l-1.5 1.7z" fill="#c0c4c7"/>
<path d="M113 8.5 A3.5 3.5 0 1 0 111 13" fill="none" stroke="#b4b8bb" stroke-width="1"/><path d="M114 6.5 L113.5 10 L110.5 9" fill="none" stroke="#b4b8bb" stroke-width="0.9"/>
<path d="M117 8.5 h3 l-1.5 1.7z" fill="#c0c4c7"/>
<rect x="122.5" y="3.5" width="20" height="12" fill="#e9ecec" stroke="#bfc3c4" stroke-width="0.8"/><line x1="135" y1="4" x2="135" y2="15" stroke="#c5c9ca" stroke-width="0.8"/>
<rect x="124.5" y="6" width="9" height="7" fill="none" stroke="#4a4e51" stroke-width="0.9" stroke-dasharray="1.4 1.2"/>
<path d="M137 8.5 h3.5 l-1.75 2z" fill="#45494c"/>
<rect x="145" y="8" width="4" height="6" fill="#8fd0ec"/><rect x="148" y="10" width="5" height="4" fill="#9ea3a6"/><path d="M147 4 L151 7 L148 8 Z" fill="#1a78b8"/><path d="M149 4 L153 5" stroke="#1a78b8" stroke-width="1"/>
<rect x="157.5" y="6" width="7" height="6" fill="#fff" stroke="#3a9ad0" stroke-width="0.9" rx="1"/><rect x="159" y="8" width="4" height="3" fill="#8dd0ee"/><path d="M158 12 L156 14" stroke="#888" stroke-width="0.8"/>
<path d="M168.5 8.5 h3.5 l-1.75 2z" fill="#45494c"/>
<path d="M178.5 6.5 h6 v6 h-6z M180 8 l3 3 M183 8 l-3 3" fill="none" stroke="#555" stroke-width="0.8"/>
<line x1="187.5" y1="4" x2="187.5" y2="15" stroke="#c2c6c7" stroke-width="0.8"/>
<path d="M191.5 8 h4 l-2 2.3z" fill="#3c4043"/>
<line x1="958" y1="10.5" x2="963.5" y2="10.5" stroke="#555" stroke-width="0.9"/>
<rect x="972.5" y="7.5" width="5" height="4.5" fill="none" stroke="#555" stroke-width="0.9"/><line x1="972.5" y1="8.3" x2="977.5" y2="8.3" stroke="#555" stroke-width="1"/>
<path d="M986.5 7.2 L991 11.7 M991 7.2 L986.5 11.7" stroke="#555" stroke-width="0.9"/>
<path d="M944.5 23.5 L947.2 21 L950 23.5" fill="none" stroke="#fff" stroke-width="1.2"/>
<circle cx="959.3" cy="22.5" r="2" fill="none" stroke="#fff" stroke-width="1"/><line x1="957.8" y1="24" x2="955.8" y2="26" stroke="#fff" stroke-width="1.2"/>
<ellipse cx="971" cy="23" rx="3" ry="2.2" fill="#e8eaea"/><line x1="968" y1="23" x2="974" y2="23" stroke="#3a4344" stroke-width="0.6"/>
<path d="M979 22.5 h3.5 l-1.75 2z" fill="#fff"/>
<text x="988.3" y="27" font-family="Liberation Sans" font-weight="700" font-size="8.6" fill="#fff">?</text>
<line x1="112.5" y1="32" x2="112.5" y2="85" stroke="#dde1e2" stroke-width="1"/>
<line x1="226.2" y1="32" x2="226.2" y2="85" stroke="#dde1e2" stroke-width="1"/>
<line x1="461.6" y1="32" x2="461.6" y2="85" stroke="#dde1e2" stroke-width="1"/>
<line x1="612.2" y1="32" x2="612.2" y2="85" stroke="#dde1e2" stroke-width="1"/>
<line x1="689.8" y1="32" x2="689.8" y2="85" stroke="#dde1e2" stroke-width="1"/>
<line x1="808" y1="32" x2="808" y2="85" stroke="#dde1e2" stroke-width="1"/>
<line x1="737.3" y1="35" x2="737.3" y2="70" stroke="#a9adb0" stroke-width="0.8"/>
<rect x="3.8" y="31.8" width="34" height="40.5" fill="#e1e4e6" stroke="#cdd1d3" stroke-width="0.8"/>
<path d="M13.5 38.3 H17 V46.3 H22 V49.8 H13.5 Z" fill="#f8f8f8" stroke="#9ea2a5" stroke-width="0.7"/>
<rect x="22.2" y="37.5" width="5.8" height="4.3" fill="#3d3f41" rx="0.5"/><path d="M23.3 37.8 V36 A1.8 1.8 0 0 1 26.9 36 V37.8" fill="none" stroke="#3d3f41" stroke-width="1"/>
<path d="M23.5 47.5 H27.5" stroke="#333" stroke-width="0.8"/><path d="M27 46 L29 47.5 L27 49 Z" fill="#333"/>
<path d="M40.5 35 H46 L48.3 37.3 V41.5 H40.5 Z" fill="#fdfdfd" stroke="#a3a7aa" stroke-width="0.6"/><circle cx="41.8" cy="35.6" r="1.2" fill="#f59a1c"/><path d="M41 41 L48 38" stroke="#b9ddf0" stroke-width="0.8"/>
<path d="M40.5 49 H46 L48.3 51.3 V55.5 H40.5 Z" fill="#fdfdfd" stroke="#a3a7aa" stroke-width="0.6"/><path d="M41 55 L48 52" stroke="#c9e3f0" stroke-width="0.8"/>
<path d="M40.8 62.5 H43 L45 64.5 H47.8 V69.3 H40.8 Z" fill="#f4fafd" stroke="#3a8fc2" stroke-width="0.8"/>
<rect x="124.5" y="33.8" width="10" height="8" fill="#eaf5fb" stroke="#cfd6da" stroke-width="0.5"/><rect x="121.5" y="36.5" width="10.5" height="8.5" fill="#e6f3fa" stroke="#cfd6da" stroke-width="0.5"/>
<rect x="118.3" y="40" width="12" height="9.3" fill="url(#gphoto)" stroke="#d2d8dc" stroke-width="0.6"/>
<path d="M140.5 35 H146 L148.5 37.5 V42 H140.5 Z" fill="#fafafa" stroke="#7a7e81" stroke-width="0.6"/><path d="M143 38.5 A1.8 1.8 0 1 1 145.5 40" fill="none" stroke="#444" stroke-width="0.8"/>
<rect x="140.3" y="48" width="8.6" height="8" fill="#6ab8e0"/><rect x="140.3" y="53" width="8.6" height="3" fill="#d9bb80"/><rect x="143.6" y="49.5" width="1.5" height="5.5" fill="#4e8a35"/>
<rect x="140.8" y="61.8" width="7.8" height="7.8" fill="#f7fbfd" stroke="#4a9ad0" stroke-width="0.7" stroke-dasharray="1.5 0.8"/><rect x="142.5" y="65.5" width="5" height="3.3" fill="#cfe8f5"/>
<path d="M236.3 38 H248 L250.8 41.8 L247.2 50.2 H234.2 L233 46 Z" fill="url(#gblue)" stroke="#9fd3ea" stroke-width="0.6"/><path d="M233 46 H247.2 L250.8 41.8 L247.2 50.2 Z" fill="#4aa8d8" opacity="0.75"/><path d="M233 46 H247.2 V50.2 H234.2 Z" fill="#dff3fb"/>
<path d="M262 38 H273.8 L276.6 41.8 L273 50.2 H260 L258.8 46 Z" fill="#fafafa" stroke="#3c4043" stroke-width="0.8"/><path d="M258.8 46 H272.8 L276.6 41.8 M272.8 46 L273 50.2 M274.5 41 L271 45.5" fill="none" stroke="#3c4043" stroke-width="0.6"/>
<rect x="290.5" y="39.8" width="7.5" height="6.2" fill="#fdfdfd" stroke="#c9cdd0" stroke-width="0.5"/><rect x="296.2" y="39.8" width="1.8" height="6.2" fill="#3aa0d5"/>
<rect x="299.5" y="39.8" width="7.5" height="6.2" fill="#fdfdfd" stroke="#c9cdd0" stroke-width="0.5"/><rect x="305.2" y="39.8" width="1.8" height="6.2" fill="#3aa0d5"/>
<path d="M297 38 A4 3.5 0 0 1 304.5 36" fill="none" stroke="#333" stroke-width="0.9"/><path d="M303.5 34.5 L305 37 L302.5 37.5 Z" fill="#333"/>
<path d="M293 47.5 A4 3.5 0 0 0 300.5 50" fill="none" stroke="#333" stroke-width="0.9"/><path d="M301.5 51 L301 48.5 L299 49.5 Z" fill="#333"/>
<rect x="318.5" y="34.5" width="3.5" height="4" fill="#fff" stroke="#555" stroke-width="0.6"/><rect x="318.5" y="39.5" width="8.5" height="2.5" rx="1" fill="none" stroke="#777" stroke-width="0.6"/>
<circle cx="325" cy="49.5" r="2.3" fill="none" stroke="#8a8e91" stroke-width="0.7"/><circle cx="321" cy="53" r="1.6" fill="#2d8fcf"/><rect x="324" y="48.5" width="2.5" height="2" fill="#2d8fcf"/><line x1="321.5" y1="52.5" x2="324" y2="50.5" stroke="#2d8fcf" stroke-width="0.7"/>
<path d="M323 61.5 L326.5 64.5 L323 67.5 L319.5 64.5 Z" fill="#fff" stroke="#777" stroke-width="0.6"/><rect x="318.5" y="67.3" width="4.5" height="2.5" rx="1" fill="none" stroke="#888" stroke-width="0.6"/>
<rect x="376" y="36.5" width="8.5" height="3.3" fill="#e5e2c8" stroke="#9a9a80" stroke-width="0.5"/><line x1="379.5" y1="36" x2="379.5" y2="40.5" stroke="#666" stroke-width="0.6"/>
<path d="M376.5 50.5 L378.5 49.5 L379.5 52.5 L377.5 53.5 Z M381 50 A1.5 1.5 0 1 1 382.5 53 L381.5 54" fill="none" stroke="#c5c9cc" stroke-width="0.6"/>
<path d="M376.5 65 H381 V70 H376.5 Z" fill="#fff" stroke="#7a7e81" stroke-width="0.6"/><path d="M377.5 64 L383 62.5 V68" fill="none" stroke="#7a7e81" stroke-width="0.5"/><rect x="382" y="61" width="2.3" height="3.8" fill="#1e7fc0"/>
<path d="M466 35.5 H472.5 V42 H466 Z" fill="#fafdfe" stroke="#a3a7aa" stroke-width="0.6"/><path d="M467 36 H472.5 V41.5" fill="none" stroke="#2b9ad3" stroke-width="1.1"/><path d="M466 35.5 L467.5 34.3 H473.8 V40.8 L472.5 42" fill="none" stroke="#a3a7aa" stroke-width="0.5"/>
<path d="M466 49.5 H472.5 V56 H466 Z" fill="#fafafa" stroke="#a3a7aa" stroke-width="0.6"/><path d="M466 49.5 L467.5 48.3 H473.8 V54.8 L472.5 56" fill="none" stroke="#a3a7aa" stroke-width="0.5"/><path d="M468.5 52 V54 H470.5" fill="none" stroke="#666" stroke-width="0.6"/>
<path d="M466.5 63 H469 M466.5 67.5 H469 M466 65.3 L468 63 M466 68 L468 70" stroke="#555" stroke-width="0.7"/><rect x="469.5" y="64" width="3.8" height="2.6" fill="none" stroke="#555" stroke-width="0.6"/>
<path d="M535.5 35 V42 M542.5 35 V42 M535.5 36 H542.5 M535.5 41 H542.5 M538 36 V41 M540 36 V41" stroke="#c5c9cc" stroke-width="0.7"/>
<rect x="535.5" y="49" width="7.5" height="6.5" rx="1.5" fill="none" stroke="#c5c9cc" stroke-width="0.7"/><line x1="535.5" y1="52" x2="543" y2="52" stroke="#c5c9cc" stroke-width="0.7"/>
<rect x="535.5" y="62.5" width="8" height="7" fill="none" stroke="#c5c9cc" stroke-width="0.7"/><path d="M536.5 66 H541 M539.5 64.5 L541.2 66 L539.5 67.5" fill="none" stroke="#c5c9cc" stroke-width="0.6"/>
<path d="M616.5 35 H623.5 V41.5 H616.5 Z" fill="#fff" stroke="#6e7275" stroke-width="0.7"/><path d="M618 40 L621 37 L622.5 38.5" fill="none" stroke="#6e7275" stroke-width="0.6"/><circle cx="617.5" cy="41" r="1.2" fill="#2b8fd0"/>
<rect x="616.5" y="48.5" width="7.5" height="7.5" fill="none" stroke="#c5c9cc" stroke-width="0.7"/><path d="M618 54 L622 50" stroke="#c5c9cc" stroke-width="0.6"/>
<path d="M617.5 63.5 H624 L622.5 69 H616 Z" fill="#fff" stroke="#5a5e61" stroke-width="0.7"/><line x1="616" y1="69" x2="622.5" y2="69" stroke="#2b9ad3" stroke-width="1"/>
<text x="694.3" y="43.8" font-family="Liberation Sans" font-size="12" fill="#222" transform="translate(694.3 43.8) scale(0.68 1.0) translate(-694.3 -43.8)">A</text>
<text x="696.6" y="49.8" font-family="Liberation Serif" font-weight="700" font-size="17.5" fill="#1a8ac8" transform="translate(696.6 49.8) scale(1.0 1.12) translate(-696.6 -49.8)">A</text>
<path d="M716.5 45.5 L729.5 33.5" stroke="#555" stroke-width="2.2"/><path d="M717 45 L729.5 33.5" stroke="#f4f1ec" stroke-width="1.2"/><path d="M719 44 L730 34.3" stroke="#9a6a40" stroke-width="0.9"/><path d="M716 46.3 L717.3 44.3 L718.3 45.3 Z" fill="#333"/>
<line x1="714" y1="46.5" x2="731" y2="46.5" stroke="#2aa0d8" stroke-width="0.9" stroke-dasharray="2 1"/>
<path d="M741 41 H745 M745 41 L746 36 Q746.5 35 748 35 M744 38 H747 M745.5 39.5 H748 M745.5 39.5 L745 43" fill="none" stroke="#333" stroke-width="0.9"/>
<path d="M741.5 55.5 L748.5 48.5 M743.5 55.5 L749 50 M741.5 49.5 L743.5 49.5" stroke="#c5c9cc" stroke-width="0.9"/>
<circle cx="744.5" cy="65" r="3.3" fill="#c5c9cc"/><circle cx="747" cy="68" r="2" fill="#dde0e2"/>
<path d="M176.3 79.6 h3.4 l-1.7 1.9z" fill="#3c4043"/>
<path d="M361.1 79.6 h3.4 l-1.7 1.9z" fill="#3c4043"/>
<path d="M542.8 79.6 h3.4 l-1.7 1.9z" fill="#3c4043"/>
<path d="M660.5999999999999 79.6 h3.4 l-1.7 1.9z" fill="#3c4043"/>
<path d="M760.3 79.6 h3.4 l-1.7 1.9z" fill="#3c4043"/>
<path d="M786.0999999999999 37.4 h3.4 l-1.7 1.9z" fill="#3c4043"/></svg>
<div class="t" style="left:356px;top:7.00px;font-size:6.8px;color:#4a4f50;transform:scaleX(0.9781);">6735-015_MAP_ASM (Active) V:\Marco\marco_test\6735-015_map_asm.drw.6 - Creo Parametric</div>
<div class="t" style="left:17px;top:5.70px;font-size:8.2px;color:#606467;transform:scaleX(1.1922);">creo</div>
<div class="t" style="left:12.5px;top:21.90px;font-size:6.6px;color:#ffffff;transform:scaleX(0.8941);">File</div>
<div class="t" style="left:45px;top:21.90px;font-size:6.6px;color:#4e9a3c;transform:scaleX(0.9590);">Layout</div>
<div class="t" style="left:89px;top:21.90px;font-size:6.6px;color:#f4f5f5;transform:scaleX(1.0783);">Table</div>
<div class="t" style="left:129px;top:21.90px;font-size:6.6px;color:#f4f5f5;transform:scaleX(1.0604);">Annotate</div>
<div class="t" style="left:181px;top:21.90px;font-size:6.6px;color:#f4f5f5;transform:scaleX(0.9915);">Sketch</div>
<div class="t" style="left:224.5px;top:21.90px;font-size:6.6px;color:#f4f5f5;transform:scaleX(1.0614);">Legacy Migration</div>
<div class="t" style="left:301.6px;top:21.90px;font-size:6.6px;color:#f4f5f5;transform:scaleX(0.9852);">Analysis</div>
<div class="t" style="left:350px;top:21.90px;font-size:6.6px;color:#f4f5f5;transform:scaleX(0.9711);">Review</div>
<div class="t" style="left:395px;top:21.90px;font-size:6.6px;color:#f4f5f5;transform:scaleX(1.1034);">Tools</div>
<div class="t" style="left:435.7px;top:21.90px;font-size:6.6px;color:#f4f5f5;transform:scaleX(1.0079);">View</div>
<div class="t" style="left:474px;top:21.90px;font-size:6.6px;color:#f4f5f5;transform:scaleX(1.0308);">Framework</div>
<div class="t" style="left:50.5px;top:35.35px;font-size:6.3px;color:#4b4f52;transform:scaleX(0.9412);">New Sheet</div>
<div class="t" style="left:50.5px;top:49.35px;font-size:6.3px;color:#4b4f52;transform:scaleX(0.9229);">Sheet Setup</div>
<div class="t" style="left:50.5px;top:63.15px;font-size:6.3px;color:#4b4f52;transform:scaleX(0.9577);">Move or Copy Sheets</div>
<div class="t" style="left:7px;top:56.85px;font-size:6.3px;color:#4b4f52;transform:scaleX(0.9443);">Lock View</div>
<div class="t" style="left:5.5px;top:64.15px;font-size:6.3px;color:#4b4f52;transform:scaleX(1.0372);">Movement</div>
<div class="t" style="left:43.5px;top:77.55px;font-size:6.3px;color:#4b4f52;transform:scaleX(0.9929);">Document</div>
<div class="t" style="left:116.5px;top:56.85px;font-size:6.3px;color:#4b4f52;transform:scaleX(0.9440);">Images</div>
<div class="t" style="left:150.8px;top:35.35px;font-size:6.3px;color:#4b4f52;transform:scaleX(1.0078);">Import Drawing/Data</div>
<div class="t" style="left:150.8px;top:49.35px;font-size:6.3px;color:#4b4f52;">Object</div>
<div class="t" style="left:150.8px;top:63.15px;font-size:6.3px;color:#4b4f52;">Copy from Other Drawing</div>
<div class="t" style="left:159px;top:77.55px;font-size:6.3px;color:#4b4f52;transform:scaleX(0.9524);">Insert</div>
<div class="t" style="left:230px;top:56.85px;font-size:6.3px;color:#4b4f52;transform:scaleX(0.9953);">Drawing</div>
<div class="t" style="left:231px;top:64.15px;font-size:6.3px;color:#4b4f52;transform:scaleX(0.9846);">Models</div>
<div class="t" style="left:257px;top:56.85px;font-size:6.3px;color:#4b4f52;transform:scaleX(0.9372);">General</div>
<div class="t" style="left:262px;top:64.15px;font-size:6.3px;color:#4b4f52;transform:scaleX(0.8120);">View</div>
<div class="t" style="left:287px;top:56.85px;font-size:6.3px;color:#4b4f52;transform:scaleX(0.9520);">Replace</div>
<div class="t" style="left:282px;top:64.15px;font-size:6.3px;color:#4b4f52;transform:scaleX(0.9865);">View Model</div>
<div class="t" style="left:328.9px;top:35.35px;font-size:6.3px;color:#4b4f52;transform:scaleX(0.9885);">Projection View</div>
<div class="t" style="left:328.9px;top:49.35px;font-size:6.3px;color:#4b4f52;transform:scaleX(0.9664);">Detailed View</div>
<div class="t" style="left:328.9px;top:63.15px;font-size:6.3px;color:#4b4f52;transform:scaleX(0.9746);">Auxiliary View</div>
<div class="t" style="left:386px;top:35.35px;font-size:6.3px;color:#4b4f52;transform:scaleX(0.9555);">Revolved View</div>
<div class="t" style="left:386px;top:49.35px;font-size:6.3px;color:#b9bdc0;transform:scaleX(0.9886);">Copy and Align View</div>
<div class="t" style="left:386px;top:63.15px;font-size:6.3px;color:#4b4f52;">Drawing View Information</div>
<div class="t" style="left:323.6px;top:77.55px;font-size:6.3px;color:#4b4f52;transform:scaleX(0.9946);">Model Views</div>
<div class="t" style="left:475.8px;top:35.35px;font-size:6.3px;color:#3c4043;">Component Display</div>
<div class="t" style="left:475.8px;top:49.35px;font-size:6.3px;color:#3c4043;transform:scaleX(0.9485);">Edge Display</div>
<div class="t" style="left:475.8px;top:63.15px;font-size:6.3px;color:#3c4043;transform:scaleX(0.9799);">Arrows</div>
<div class="t" style="left:545.5px;top:35.35px;font-size:6.3px;color:#b9bdc0;transform:scaleX(0.9916);">Hatch / Fill</div>
<div class="t" style="left:545.5px;top:49.35px;font-size:6.3px;color:#b9bdc0;transform:scaleX(0.9811);">Convert to Draft Group</div>
<div class="t" style="left:545.5px;top:63.15px;font-size:6.3px;color:#b9bdc0;transform:scaleX(0.9481);">Move to Sheet</div>
<div class="t" style="left:529px;top:77.55px;font-size:6.3px;color:#4b4f52;transform:scaleX(1.1050);">Edit</div>
<div class="t" style="left:626.4px;top:35.35px;font-size:6.3px;color:#4b4f52;transform:scaleX(0.9222);">Erase view</div>
<div class="t" style="left:626.4px;top:49.35px;font-size:6.3px;color:#b9bdc0;transform:scaleX(0.9191);">Resume View</div>
<div class="t" style="left:626.4px;top:63.15px;font-size:6.3px;color:#4b4f52;transform:scaleX(0.9703);">Show Modified Edges</div>
<div class="t" style="left:638.6px;top:77.55px;font-size:6.3px;color:#4b4f52;transform:scaleX(0.9392);">Display</div>
<div class="t" style="left:696px;top:56.85px;font-size:6.3px;color:#4b4f52;transform:scaleX(0.9514);">Text</div>
<div class="t" style="left:695px;top:64.15px;font-size:6.3px;color:#4b4f52;transform:scaleX(0.9286);">Style</div>
<div class="t" style="left:717px;top:56.85px;font-size:6.3px;color:#4b4f52;transform:scaleX(0.9239);">Line</div>
<div class="t" style="left:716px;top:64.15px;font-size:6.3px;color:#4b4f52;transform:scaleX(0.9286);">Style</div>
<div class="t" style="left:751.5px;top:35.35px;font-size:6.3px;color:#3c4043;transform:scaleX(0.9657);">Arrow Style</div>
<div class="t" style="left:751.5px;top:49.35px;font-size:6.3px;color:#b9bdc0;transform:scaleX(0.9361);">Repeat Last Format</div>
<div class="t" style="left:751.5px;top:63.15px;font-size:6.3px;color:#b9bdc0;transform:scaleX(0.9333);">Hyperlink</div>
<div class="t" style="left:736.4px;top:77.55px;font-size:6.3px;color:#4b4f52;transform:scaleX(1.0324);">Format</div>
<div class="t" style="left:18px;top:91.65px;font-size:6.7px;color:#3a3e41;transform:scaleX(0.9113);">Model Tree</div>
<div class="t" style="left:69px;top:91.65px;font-size:6.7px;color:#505457;transform:scaleX(0.9449);">Folder Br</div>
<div class="t" style="left:116px;top:91.65px;font-size:6.7px;color:#3a3e41;transform:scaleX(0.8722);">Favorites</div>
<div class="t" style="left:17.5px;top:106.70px;font-size:6.6px;color:#3d4144;font-weight:700;transform:scaleX(0.9295);">Drawing Tree</div>
<div class="t" style="left:20.7px;top:118.80px;font-size:6.4px;color:#34383b;transform:scaleX(0.8782);">Sheet 5 of 6735-015_MAP_ASM.DRW</div>
<div class="t" style="left:31px;top:128.10px;font-size:6.4px;color:#34383b;transform:scaleX(0.8237);">ASM_EDM_GENERAL_VIEW</div>
<div class="t" style="left:31px;top:137.30px;font-size:6.4px;color:#34383b;transform:scaleX(0.8360);">ASM_EDM_VIEW_1</div>
<div class="t" style="left:17.3px;top:316.30px;font-size:6.6px;color:#3d4144;font-weight:700;transform:scaleX(0.9491);">Model Tree</div>
<div class="t" style="left:19px;top:328.90px;font-size:6.4px;color:#34383b;transform:scaleX(0.8523);">6735-015_MAP_ASM.ASM</div>
<div class="t" style="left:29px;top:338.40px;font-size:6.4px;color:#34383b;transform:scaleX(0.8312);">ASM_RIGHT</div>
<div class="t" style="left:29px;top:347.80px;font-size:6.4px;color:#34383b;transform:scaleX(0.8378);">ASM_TOP</div>
<div class="t" style="left:29px;top:357.00px;font-size:6.4px;color:#34383b;transform:scaleX(0.8371);">ASM_FRONT</div>
<div class="t" style="left:29px;top:366.40px;font-size:6.4px;color:#34383b;transform:scaleX(0.7819);">ASM_DEF_CSYS</div>
<div class="t" style="left:29px;top:376.20px;font-size:6.4px;color:#34383b;transform:scaleX(0.8443);">6735-015.PRT</div>
<div class="t" style="left:29px;top:385.50px;font-size:6.4px;color:#34383b;transform:scaleX(0.8284);">Group SE_AUTO_CSYS_69</div>
<div class="t" style="left:29px;top:394.70px;font-size:6.4px;color:#34383b;transform:scaleX(0.8714);">Group 6735-015_OP_01</div>
<div class="t" style="left:29px;top:404.20px;font-size:6.4px;color:#34383b;transform:scaleX(0.8191);">6735-015_EL_01.PRT</div>
<div class="t" style="left:29px;top:413.50px;font-size:6.4px;color:#34383b;transform:scaleX(0.8191);">6735-015_EL_02.PRT</div>
<div class="t" style="left:29px;top:422.80px;font-size:6.4px;color:#34383b;transform:scaleX(0.8191);">6735-015_EL_01.PRT</div>
<div class="t" style="left:29px;top:432.20px;font-size:6.4px;color:#34383b;transform:scaleX(0.8191);">6735-015_EL_02.PRT</div>
<div class="t" style="left:155.2px;top:501.00px;font-size:6.2px;color:#a3a6ab;transform:scaleX(1.0217);-webkit-text-stroke:0.03px currentColor;">SCALE : 1:2</div>
<div class="t" style="left:206.9px;top:501.00px;font-size:6.2px;color:#a3a6ab;transform:scaleX(1.0037);-webkit-text-stroke:0.03px currentColor;">TYPE : ASSEM</div>
<div class="t" style="left:259px;top:501.00px;font-size:6.2px;color:#a3a6ab;-webkit-text-stroke:0.03px currentColor;">NAME : 6735-015_MAP_ASM</div>
<div class="t" style="left:264px;top:494.00px;font-size:6.2px;color:#a3a6ab;transform:scaleX(1.0268);-webkit-text-stroke:0.03px currentColor;">REP : 6735-015_EL_02</div>
<div class="t" style="left:352px;top:501.00px;font-size:6.2px;color:#a3a6ab;transform:scaleX(0.9946);-webkit-text-stroke:0.03px currentColor;">SIZE : A4</div>
<div class="t" style="left:387px;top:501.00px;font-size:6.2px;color:#a3a6ab;transform:scaleX(1.0496);-webkit-text-stroke:0.03px currentColor;">SHEET 5  OF 5</div>
<div class="t" style="left:847px;top:473.30px;font-size:6.2px;color:#a3a6ab;transform:scaleX(1.3020);-webkit-text-stroke:0.03px currentColor;">X.X</div>
<div class="t" style="left:844px;top:480.00px;font-size:6.2px;color:#a3a6ab;transform:scaleX(1.1340);-webkit-text-stroke:0.03px currentColor;">X.XX</div>
<div class="t" style="left:841.7px;top:486.80px;font-size:6.2px;color:#a3a6ab;transform:scaleX(1.0036);-webkit-text-stroke:0.03px currentColor;">X.XXX</div>
<div class="t" style="left:843.5px;top:493.50px;font-size:6.2px;color:#a3a6ab;transform:scaleX(0.9577);-webkit-text-stroke:0.03px currentColor;">ANG.</div>
<div class="t" style="left:862.7px;top:473.30px;font-size:6.2px;color:#a3a6ab;transform:scaleX(0.9663);-webkit-text-stroke:0.03px currentColor;">+-0.1</div>
<div class="t" style="left:862.7px;top:480.00px;font-size:6.2px;color:#a3a6ab;transform:scaleX(0.9199);-webkit-text-stroke:0.03px currentColor;">+-0.01</div>
<div class="t" style="left:862.7px;top:486.80px;font-size:6.2px;color:#a3a6ab;transform:scaleX(0.9588);-webkit-text-stroke:0.03px currentColor;">+-0.001</div>
<div class="t" style="left:862.7px;top:493.50px;font-size:6.2px;color:#a3a6ab;-webkit-text-stroke:0.03px currentColor;">+-0.5</div>
<div class="t" style="left:201px;top:512.10px;font-size:6.6px;color:#3a3e41;transform:scaleX(0.9089);">Blatt 1</div>
<div class="t" style="left:228px;top:512.10px;font-size:6.6px;color:#3a3e41;transform:scaleX(0.8797);">Sheet 1</div>
<div class="t" style="left:258px;top:512.10px;font-size:6.6px;color:#3a3e41;transform:scaleX(0.9237);">Sheet 2</div>
<div class="t" style="left:289px;top:512.10px;font-size:6.6px;color:#3a3e41;transform:scaleX(0.8797);">Sheet 3</div>
<div class="t" style="left:323px;top:512.00px;font-size:6.8px;color:#2a2e31;font-weight:700;transform:scaleX(0.9096);">Sheet 4</div>
<div class="t" style="left:59px;top:527.95px;font-size:6.9px;color:#35393c;transform:scaleX(0.8115);">Duplicate view names found:  view EDM_DEFAULT_GENERAL_VIEW on sheet 2, and view EDM_DEFAULT_GENERAL_VIEW on sheet 4.</div>
<div class="t" style="left:906px;top:528.25px;font-size:6.7px;color:#3a3e41;transform:scaleX(0.8825);">General</div>
<div class="t" style="left:45.5px;top:548.60px;font-size:7.6px;color:#2e3235;-webkit-text-stroke:0.05px currentColor;">Skriv her for at søge</div>
<div class="t" style="left:823px;top:548.80px;font-size:7.2px;color:#e8ecef;transform:scaleX(0.9828);">Regner nu</div>
<div class="t" style="left:919px;top:548.90px;font-size:6.8px;color:#e8ecef;transform:scaleX(0.9053);">DAN</div>
<div class="t" style="left:946px;top:543.70px;font-size:6.6px;color:#e8ecef;transform:scaleX(0.9082);">16:53</div>
<div class="t" style="left:938px;top:553.20px;font-size:6.6px;color:#e8ecef;transform:scaleX(0.8893);">17-10-2022</div>
<div class="t" style="left:443.5px;top:166.40px;font-size:7.0px;color:#111;transform:scaleX(0.7181);-webkit-text-stroke:0.05px currentColor;">EDM_NAME</div>
<div class="t" style="left:507px;top:166.40px;font-size:7.0px;color:#111;transform:scaleX(0.7492);-webkit-text-stroke:0.05px currentColor;">X</div>
<div class="t" style="left:537px;top:166.40px;font-size:7.0px;color:#111;transform:scaleX(0.7492);-webkit-text-stroke:0.05px currentColor;">Y</div>
<div class="t" style="left:567.5px;top:166.40px;font-size:7.0px;color:#111;transform:scaleX(0.8175);-webkit-text-stroke:0.05px currentColor;">Z</div>
<div class="t" style="left:597.5px;top:166.40px;font-size:7.0px;color:#111;transform:scaleX(0.6914);-webkit-text-stroke:0.05px currentColor;">C</div>
<div class="t" style="left:616px;top:166.40px;font-size:7.0px;color:#111;transform:scaleX(0.6940);-webkit-text-stroke:0.05px currentColor;">BURNAREA</div>
<div class="t" style="left:640px;top:166.40px;font-size:7.0px;color:#111;transform:scaleX(0.8118);-webkit-text-stroke:0.05px currentColor;">UNDERSIZE1</div>
<div class="t" style="left:646px;top:166.40px;font-size:7.0px;color:#111;transform:scaleX(0.6765);-webkit-text-stroke:0.05px currentColor;">UNDERSIZE1</div>
<div class="t" style="left:677px;top:166.40px;font-size:7.0px;color:#111;transform:scaleX(0.5223);-webkit-text-stroke:0.05px currentColor;">UNDER</div>
<div class="t" style="left:688px;top:166.40px;font-size:7.0px;color:#111;transform:scaleX(0.8143);-webkit-text-stroke:0.05px currentColor;">OVERSIZE1</div>
<div class="t" style="left:692px;top:166.40px;font-size:7.0px;color:#111;transform:scaleX(1.0136);-webkit-text-stroke:0.05px currentColor;">SIZE2Z1</div>
<div class="t" style="left:720.5px;top:166.40px;font-size:7.0px;color:#111;transform:scaleX(0.5424);-webkit-text-stroke:0.05px currentColor;">UNDER</div>
<div class="t" style="left:733px;top:166.40px;font-size:7.0px;color:#111;transform:scaleX(0.7889);-webkit-text-stroke:0.05px currentColor;">OVERSIZE2</div>
<div class="t" style="left:736px;top:166.40px;font-size:7.0px;color:#111;transform:scaleX(1.0136);-webkit-text-stroke:0.05px currentColor;">SIZE2Z2</div>
<div class="t" style="left:764px;top:166.40px;font-size:7.0px;color:#111;transform:scaleX(0.5625);-webkit-text-stroke:0.05px currentColor;">UNDER</div>
<div class="t" style="left:777px;top:166.40px;font-size:7.0px;color:#111;transform:scaleX(0.7889);-webkit-text-stroke:0.05px currentColor;">OVERSIZE3</div>
<div class="t" style="left:780px;top:166.40px;font-size:7.0px;color:#111;transform:scaleX(1.0136);-webkit-text-stroke:0.05px currentColor;">SIZE3Z3</div>
<div class="t" style="left:808px;top:166.40px;font-size:7.0px;color:#111;transform:scaleX(0.5625);-webkit-text-stroke:0.05px currentColor;">UNDER</div>
<div class="t" style="left:822.5px;top:166.40px;font-size:7.0px;color:#111;transform:scaleX(0.7729);-webkit-text-stroke:0.05px currentColor;">SIZE4  COMMENT</div>
<div class="t" style="left:424.5px;top:174.40px;font-size:7.0px;color:#222222;transform:scaleX(0.8656);-webkit-text-stroke:0.05px currentColor;">6735-015_EL_02</div>
<div class="t" style="left:495.6px;top:174.40px;font-size:7.0px;color:#222222;transform:scaleX(0.9551);-webkit-text-stroke:0.05px currentColor;">-23.0000</div>
<div class="t" style="left:526px;top:174.40px;font-size:7.0px;color:#222222;transform:scaleX(0.9768);-webkit-text-stroke:0.05px currentColor;">-27.0000</div>
<div class="t" style="left:556px;top:174.40px;font-size:7.0px;color:#222222;transform:scaleX(1.0526);-webkit-text-stroke:0.05px currentColor;">-2.0000</div>
<div class="t" style="left:586.5px;top:174.40px;font-size:7.0px;color:#222222;transform:scaleX(0.9570);-webkit-text-stroke:0.05px currentColor;">0.0000</div>
<div class="t" style="left:617px;top:174.40px;font-size:7.0px;color:#222222;transform:scaleX(0.9336);-webkit-text-stroke:0.05px currentColor;">22.755</div>
<div class="t" style="left:647.5px;top:174.40px;font-size:7.0px;color:#222222;transform:scaleX(0.9103);-webkit-text-stroke:0.05px currentColor;">0.5000</div>
<div class="t" style="left:678px;top:174.40px;font-size:7.0px;color:#222222;transform:scaleX(0.8960);-webkit-text-stroke:0.05px currentColor;">0</div>
<div class="t" style="left:691.5px;top:174.40px;font-size:7.0px;color:#222222;transform:scaleX(0.9570);-webkit-text-stroke:0.05px currentColor;">0.4000</div>
<div class="t" style="left:721.5px;top:174.40px;font-size:7.0px;color:#222222;transform:scaleX(0.8960);-webkit-text-stroke:0.05px currentColor;">0</div>
<div class="t" style="left:735.5px;top:174.40px;font-size:7.0px;color:#222222;transform:scaleX(0.9570);-webkit-text-stroke:0.05px currentColor;">0.3000</div>
<div class="t" style="left:765.5px;top:174.40px;font-size:7.0px;color:#222222;transform:scaleX(0.8960);-webkit-text-stroke:0.05px currentColor;">0</div>
<div class="t" style="left:779.5px;top:174.40px;font-size:7.0px;color:#222222;transform:scaleX(0.9570);-webkit-text-stroke:0.05px currentColor;">0.2000</div>
<div class="t" style="left:809.5px;top:174.40px;font-size:7.0px;color:#222222;transform:scaleX(0.8960);-webkit-text-stroke:0.05px currentColor;">0</div>
<div class="t" style="left:823px;top:174.40px;font-size:7.0px;color:#222222;transform:scaleX(0.8533);-webkit-text-stroke:0.05px currentColor;">-</div>
<div class="t" style="left:424.5px;top:182.40px;font-size:7.0px;color:#222222;transform:scaleX(0.8656);-webkit-text-stroke:0.05px currentColor;">6735-015_EL_02</div>
<div class="t" style="left:495.6px;top:182.40px;font-size:7.0px;color:#222222;transform:scaleX(0.9244);-webkit-text-stroke:0.05px currentColor;">23.0000</div>
<div class="t" style="left:526px;top:182.40px;font-size:7.0px;color:#222222;transform:scaleX(0.9768);-webkit-text-stroke:0.05px currentColor;">-27.0000</div>
<div class="t" style="left:556px;top:182.40px;font-size:7.0px;color:#222222;transform:scaleX(1.0526);-webkit-text-stroke:0.05px currentColor;">-2.0000</div>
<div class="t" style="left:586.5px;top:182.40px;font-size:7.0px;color:#222222;transform:scaleX(0.9570);-webkit-text-stroke:0.05px currentColor;">0.0000</div>
<div class="t" style="left:617px;top:182.40px;font-size:7.0px;color:#222222;transform:scaleX(0.9697);-webkit-text-stroke:0.05px currentColor;">0.000</div>
<div class="t" style="left:647.5px;top:182.40px;font-size:7.0px;color:#222222;transform:scaleX(0.9103);-webkit-text-stroke:0.05px currentColor;">0.5000</div>
<div class="t" style="left:678px;top:182.40px;font-size:7.0px;color:#222222;transform:scaleX(0.8960);-webkit-text-stroke:0.05px currentColor;">0</div>
<div class="t" style="left:691.5px;top:182.40px;font-size:7.0px;color:#222222;transform:scaleX(0.9570);-webkit-text-stroke:0.05px currentColor;">0.4000</div>
<div class="t" style="left:721.5px;top:182.40px;font-size:7.0px;color:#222222;transform:scaleX(0.8960);-webkit-text-stroke:0.05px currentColor;">0</div>
<div class="t" style="left:735.5px;top:182.40px;font-size:7.0px;color:#222222;transform:scaleX(0.9570);-webkit-text-stroke:0.05px currentColor;">0.3000</div>
<div class="t" style="left:765.5px;top:182.40px;font-size:7.0px;color:#222222;transform:scaleX(0.8960);-webkit-text-stroke:0.05px currentColor;">0</div>
<div class="t" style="left:779.5px;top:182.40px;font-size:7.0px;color:#222222;transform:scaleX(0.9570);-webkit-text-stroke:0.05px currentColor;">0.2000</div>
<div class="t" style="left:809.5px;top:182.40px;font-size:7.0px;color:#222222;transform:scaleX(0.8960);-webkit-text-stroke:0.05px currentColor;">0</div>
<div class="t" style="left:823px;top:182.40px;font-size:7.0px;color:#222222;transform:scaleX(0.8533);-webkit-text-stroke:0.05px currentColor;">-</div>
</body></html>
